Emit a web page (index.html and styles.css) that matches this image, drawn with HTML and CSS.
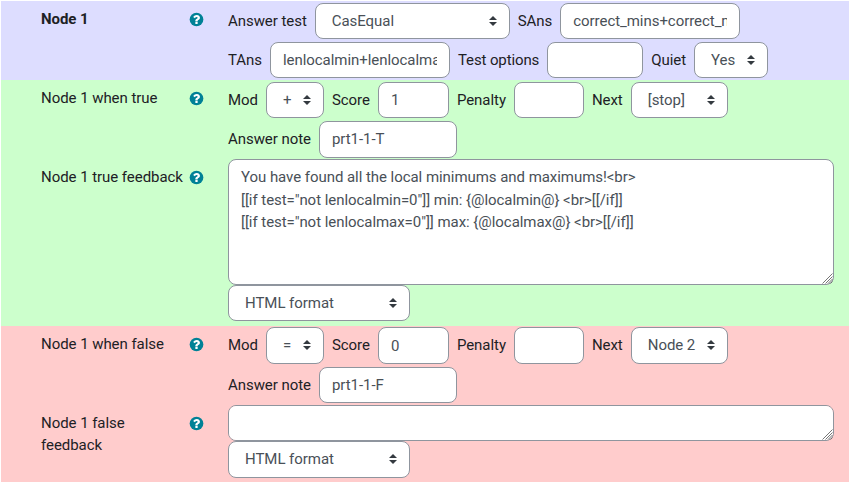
FILE: index.html
```html
<!DOCTYPE html>
<html lang="en">
<head>
<meta charset="utf-8">
<title>Node 1</title>
<link rel="stylesheet" href="styles.css">
</head>
<body>
<svg class="sprite" aria-hidden="true">
  <symbol id="help" viewBox="55 55 1682 1682"><circle cx="896" cy="896" r="768"/><path class="mark" transform="translate(128 128)" d="M896 1248v-192q0-14-9-23t-23-9H672q-14 0-23 9t-9 23v192q0 14 9 23t23 9h192q14 0 23-9t9-23zM1152 576q0-88-55.500-163T958 297t-170-41q-243 0-371 213-15 24 8 42l132 100q7 6 19 6 16 0 25-12 53-68 86-92 34-24 86-24 48 0 85.500 26t37.500 59q0 38-20 61t-68 45q-63 28-115.500 86.500T640 892v36q0 14 9 23t23 9h192q14 0 23-9t9-23q0-19 21.500-49.500T972 829q32-18 49-28.500t46-35 44.500-48 28-60.500 12.500-81z"/></symbol>
  <symbol id="sort" viewBox="0 0 4 5"><path d="M2 0L0 2h4zm0 5L0 3h4z"/></symbol>
  <symbol id="grip" viewBox="0 0 11 11"><path d="M.5 10.500l10-10M3.500 10.500l7-7M6 10.500L10.500 6M8.500 10.500l2-2"/></symbol>
</svg>
<form class="tree">
  <section class="band node">
    <div class="item">
      <div class="name"><b>Node 1</b><svg class="help"><use href="#help"/></svg></div>
      <div class="fields">
        <div class="line">
          <label>Answer test</label>
          <span class="select w-test"><select><option>CasEqual</option></select><svg><use href="#sort"/></svg></span>
          <label>SAns</label>
          <input class="w-ans" value="correct_mins+correct_maxs">
        </div>
        <div class="line">
          <label>TAns</label>
          <input class="w-ans" value="lenlocalmin+lenlocalmax">
          <label class="tight">Test options</label>
          <input class="w-options">
          <label>Quiet</label>
          <span class="select w-quiet"><select><option>Yes</option></select><svg><use href="#sort"/></svg></span>
        </div>
      </div>
    </div>
  </section>

  <section class="band true">
    <div class="item">
      <div class="name"><span>Node 1 when true</span><svg class="help"><use href="#help"/></svg></div>
      <div class="fields">
        <div class="line">
          <label>Mod</label>
          <span class="select w-mod"><select><option>+</option></select><svg><use href="#sort"/></svg></span>
          <label>Score</label>
          <input class="w-score" value="1">
          <label>Penalty</label>
          <input class="w-penalty">
          <label>Next</label>
          <span class="select w-next"><select><option>[stop]</option></select><svg><use href="#sort"/></svg></span>
        </div>
        <div class="line">
          <label>Answer note</label>
          <input class="w-note" value="prt1-1-T">
        </div>
      </div>
    </div>
    <div class="item">
      <div class="name"><span>Node 1 true feedback</span><svg class="help"><use href="#help"/></svg></div>
      <div class="editor">
        <div class="area">
          <textarea class="tall" spellcheck="false">You have found all the local minimums and maximums!&lt;br&gt;
[[if test="not lenlocalmin=0"]] min: {@localmin@} &lt;br&gt;[[/if]]
[[if test="not lenlocalmax=0"]] max: {@localmax@} &lt;br&gt;[[/if]]</textarea>
          <svg class="grip"><use href="#grip"/></svg>
        </div>
        <span class="select w-format"><select><option>HTML format</option></select><svg><use href="#sort"/></svg></span>
      </div>
    </div>
  </section>

  <section class="band false">
    <div class="item">
      <div class="name"><span>Node 1 when false</span><svg class="help"><use href="#help"/></svg></div>
      <div class="fields">
        <div class="line">
          <label>Mod</label>
          <span class="select w-mod"><select><option>=</option></select><svg><use href="#sort"/></svg></span>
          <label>Score</label>
          <input class="w-score" value="0">
          <label>Penalty</label>
          <input class="w-penalty">
          <label>Next</label>
          <span class="select w-next"><select><option>Node 2</option></select><svg><use href="#sort"/></svg></span>
        </div>
        <div class="line">
          <label>Answer note</label>
          <input class="w-note" value="prt1-1-F">
        </div>
      </div>
    </div>
    <div class="item">
      <div class="name"><span>Node 1 false feedback</span><svg class="help"><use href="#help"/></svg></div>
      <div class="editor">
        <div class="area">
          <textarea class="short" spellcheck="false"></textarea>
          <svg class="grip"><use href="#grip"/></svg>
        </div>
        <span class="select w-format"><select><option>HTML format</option></select><svg><use href="#sort"/></svg></span>
      </div>
    </div>
  </section>
</form>
</body>
</html>
```
FILE: styles.css
```css
* { box-sizing: border-box; }
html { background: #fff; overflow: hidden; }
body {
  margin: 0;
  padding: 1px 1px 0;
  font: 15px/22.5px Roboto, sans-serif;
  letter-spacing: -0.05px;
  color: #1d2125;
}
.sprite { display: none; }

.band { overflow: hidden; }
.node { height: 79px; background: #ddf; }
.true { height: 246px; background: #cfc; }
.false { height: 156px; background: #fcc; }

.item {
  display: grid;
  grid-template-columns: 163px 606px;
  column-gap: 24px;
  padding-left: 40px;
}
.name {
  display: flex;
  justify-content: space-between;
  align-items: flex-start;
  padding-top: 6.5px;
}
.name span { max-width: 143px; }
.help {
  flex: none;
  width: 15px;
  height: 15px;
  margin-top: 4.5px;
  fill: #008196;
}
.mark { fill: #fff; }

.fields {
  display: flex;
  flex-direction: column;
  gap: 2.7px;
  padding-top: 1.9px;
  height: 79px;
}
.node .fields { gap: 2.5px; }
.false .fields { padding-top: 1.4px; }
.line {
  display: flex;
  align-items: center;
  gap: 8px;
  height: 36.5px;
}
label { white-space: nowrap; letter-spacing: -0.055px; }
.tight { letter-spacing: -0.12px; }

input, select, textarea {
  display: block;
  margin: 0;
  border: 1px solid #8f959e;
  border-radius: 8px;
  background: #fff;
  color: #495057;
  font: inherit;
  letter-spacing: inherit;
}
input { height: 36.5px; padding: 6px 12px; }
select {
  appearance: none;
  width: 100%;
  height: 36.5px;
  padding: 6px 28px 6px 16px;
}
.select { display: block; position: relative; }
.select svg {
  position: absolute;
  right: 13px;
  top: 13px;
  width: 8px;
  height: 10px;
  fill: #343a40;
}
.area { position: relative; }
textarea {
  width: 606px;
  padding: 6px 12px;
  resize: none;
  overflow: auto;
}
.grip {
  position: absolute;
  right: 1px;
  bottom: 1px;
  width: 11px;
  height: 11px;
  fill: none;
  stroke: #666;
  stroke-width: .9;
}
.tall { height: 125.8px; }
.short { height: 36.4px; }

.w-test { width: 195px; }
.w-ans { width: 180px; }
.w-options { width: 96px; }
.w-quiet { width: 74px; }
.w-mod { width: 58px; }
.w-score { width: 71px; }
.w-penalty { width: 70px; }
.w-next { width: 97px; }
.w-note { width: 138px; }
.w-format { width: 182px; }
```
